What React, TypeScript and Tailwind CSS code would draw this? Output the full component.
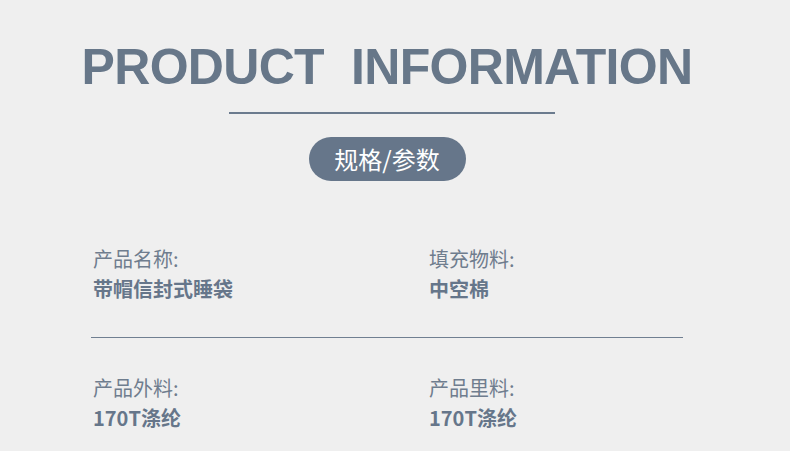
export default function App() {
  const rows = [
    [
      { label: "产品名称:", value: "带帽信封式睡袋" },
      { label: "填充物料:", value: "中空棉" },
    ],
    [
      { label: "产品外料:", value: "170T涤纶" },
      { label: "产品里料:", value: "170T涤纶" },
    ],
  ];

  return (
    <div className="w-[790px] h-[451px] bg-[#efefef] overflow-hidden text-[#66768a] font-['Noto_Sans_CJK_SC',sans-serif]">
      <div className="flex flex-col items-center pr-[16px]">
        <h1 className="mt-[37px] h-[60px] leading-[60px] text-[50px] font-bold tracking-[-0.7px] [word-spacing:14px] font-['Liberation_Sans',sans-serif] text-[#677789]">
          PRODUCT INFORMATION
        </h1>
        <div className="mt-[15px] ml-[10px] w-[326px] h-[2px] bg-[#6b7b8e]" />
        <div className="mt-[23px] w-[157px] h-[44px] rounded-full bg-[#66768a] flex items-center justify-center text-white text-[24px] leading-none">
          规格/参数
        </div>
      </div>

      <div className="ml-[91px] w-[592px] mt-[63px]">
        {rows.map((row, i) => (
          <div key={i}>
            {i > 0 && <div className="h-px bg-[#707f91] mt-[33px] mb-[35px]" />}
            <div className="flex pl-[2px]">
              {row.map((it) => (
                <div key={it.label} className="w-[336px] last:w-auto">
                  <div className="text-[20px] leading-[30px] text-[#6f7d8e]">{it.label}</div>
                  <div className="text-[20px] leading-[30px] font-bold">{it.value}</div>
                </div>
              ))}
            </div>
          </div>
        ))}
      </div>
    </div>
  );
}
